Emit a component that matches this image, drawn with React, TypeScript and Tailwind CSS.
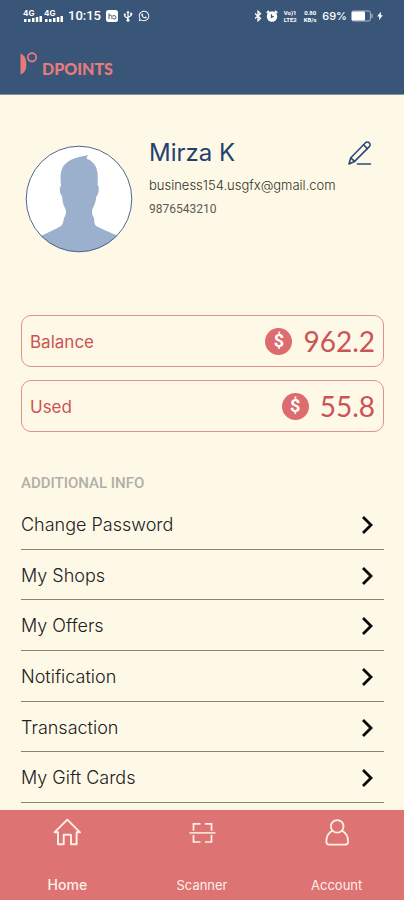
import type { ReactNode } from "react";
import { FaWhatsapp } from "react-icons/fa";

interface MenuItem {
  label: string;
  href: string;
}

const MENU: MenuItem[] = [
  { label: "Change Password", href: "#password" },
  { label: "My Shops", href: "#shops" },
  { label: "My Offers", href: "#offers" },
  { label: "Notification", href: "#notification" },
  { label: "Transaction", href: "#transaction" },
  { label: "My Gift Cards", href: "#gift-cards" },
];

// ── Status bar icons ─────────────────────────────────────────

function Signal() {
  return (
    <div className="flex w-[19px] flex-col">
      <span className="text-[8px] leading-[7px] font-bold">4G</span>
      <svg viewBox="0 0 19 6" className="-mt-px h-[6px] w-[19px]" fill="currentColor">
        <rect x="1" y="3" width="2.500" height="3" />
        <rect x="5" y="3" width="2.500" height="3" />
        <rect x="9" y="2" width="2.500" height="4" />
        <rect x="12.800" y="1" width="2.500" height="5" />
        <rect x="16.500" y="0" width="2.500" height="6" />
      </svg>
    </div>
  );
}

function NoteIcon() {
  return (
    <svg viewBox="0 0 12 12" className="h-3 w-3">
      <rect width="12" height="12" rx="2.5" fill="white" />
      <path
        d="M3 9V3.5M3 6c2-2 3-.5 3 3M6.500 6c2-1 3.500 0 3.500 1.500s-1.500 2-3 1"
        fill="none"
        stroke="#395678"
        strokeWidth="1"
      />
    </svg>
  );
}

function UsbIcon() {
  return (
    <svg viewBox="0 0 10 12" className="h-3 w-[10px]" fill="none" stroke="currentColor" strokeWidth="1.2">
      <path d="M5 2v8M5 8.500 1.800 6.500V4.500M5 7.500l3.200-2V3.500" />
      <path d="M3.300 3 5 .5 6.700 3z" fill="currentColor" stroke="none" />
      <circle cx="5" cy="10.300" r="1.500" fill="currentColor" stroke="none" />
      <circle cx="1.800" cy="4.500" r="1.100" fill="currentColor" stroke="none" />
      <rect x="7.200" y="2.800" width="2" height="2" fill="currentColor" stroke="none" />
    </svg>
  );
}

function BluetoothIcon() {
  return (
    <svg viewBox="0 0 8 12" className="h-3 w-2" fill="none" stroke="currentColor" strokeWidth="1.3">
      <path d="M1 3.500 6.500 8.300 4 10.800V1.200l2.500 2.500L1 8.500" />
    </svg>
  );
}

function AlarmIcon() {
  return (
    <svg viewBox="0 0 12 12" className="h-3 w-3">
      <circle cx="6" cy="6.500" r="5.200" fill="white" />
      <path d="M.8 3 3 1M11.200 3 9 1" stroke="white" strokeWidth="1.800" />
      <path d="M5.500 4.200v3.200l2.200-1.200" fill="none" stroke="#395678" strokeWidth="1.300" />
    </svg>
  );
}

function BatteryIcon() {
  return (
    <svg viewBox="0 0 22 12" className="h-3 w-[22px]">
      <rect x=".6" y="1" width="18.800" height="10" rx="2" fill="none" stroke="white" strokeOpacity=".6" />
      <rect x="1" y="1.500" width="13" height="9" rx="1" fill="white" />
      <rect x="20.400" y="4" width="1.200" height="4" rx=".5" fill="white" fillOpacity=".6" />
    </svg>
  );
}

function BoltIcon() {
  return (
    <svg viewBox="0 0 6 10" className="h-[10px] w-[6px]" fill="currentColor">
      <path d="M3.800.8.200 5.600h2.200L2 9.200l3.800-4.900h-2z" />
    </svg>
  );
}

// ── App icons ────────────────────────────────────────────────

function LogoMark() {
  return (
    <svg viewBox="0 0 18 24" className="h-6 w-[18px]">
      <path d="M.5 1.500C4.800 3 6.300 7.500 6.300 12.500S4.800 21 .5 22.500z" fill="#e67b7d" />
      <circle cx="12" cy="5.300" r="4.200" fill="none" stroke="#e67b7d" strokeWidth="1.800" />
    </svg>
  );
}

function Avatar() {
  return (
    <svg viewBox="0 0 108 108" className="h-27 w-27 shrink-0" role="img" aria-label="Profile photo">
      <defs>
        <clipPath id="avatar-clip">
          <circle cx="54" cy="54" r="53" />
        </clipPath>
      </defs>
      <circle cx="54" cy="54" r="53" fill="#fff" />
      <path
        clipPath="url(#avatar-clip)"
        fill="#9bb0cc"
        d="M8 93 18 90C24 87 31 84 36 81 38 79 38.500 76 39 73 41 70 41.500 67 40.500 64 38 60 37.500 56 37 51 35 49 34.500 46 35 43 35 42 36 41 36 40 35.500 34 35 29 37 24 39 19 43 16 48 14 52 12 58 11.500 63 10 62 12 61.500 13 62 14 66 15 69 18 71 22 73 27 73 34 72.500 40 74 41 74 44 73.500 47 73 49 73 50 71.500 51 71 56 69.500 60 67.500 64 66.500 67 67 70 69 73 69.500 76 69 79 71 81 77 84 84 87 91 90L100 93V110H8z"
      />
      <circle cx="54" cy="54" r="52.800" fill="none" stroke="#4f668c" strokeWidth="1" />
    </svg>
  );
}

function PencilIcon() {
  return (
    <svg
      viewBox="0 0 24 24"
      className="h-6 w-6"
      fill="none"
      stroke="#2b4a78"
      strokeWidth="1.600"
      strokeLinecap="round"
      strokeLinejoin="round"
    >
      <path d="M1 23 2.800 16.800 17.300 2a2.400 2.400 0 0 1 4 0 2.400 2.400 0 0 1 0 3.600L6.600 20.400z" />
      <path d="M2.800 16.800l3.800 3.600M15.500 3.800l3.800 3.800M9.500 23H22.500" />
    </svg>
  );
}

function Coin() {
  return (
    <span className="flex h-[27px] w-[27px] items-center justify-center rounded-full bg-[#dc6c6d] font-['Roboto',sans-serif] text-lg leading-5 font-bold text-white">
      $
    </span>
  );
}

function Chevron() {
  return (
    <svg viewBox="0 0 12 20" className="mr-[11px] h-5 w-3" fill="none" stroke="#080808" strokeWidth="2.800">
      <path d="M2 2 10 10 2 18" />
    </svg>
  );
}

function HomeIcon() {
  return (
    <svg viewBox="0 0 28 28" className="h-7 w-7" fill="none" stroke="currentColor" strokeWidth="1.900" strokeLinejoin="round">
      <path d="M1.500 14.300 14.300 1.600 27 14.300H23.600v11.900h-5.600v-9.500h-7.300v9.500H5V14.300z" />
    </svg>
  );
}

function ScanIcon() {
  return (
    <svg viewBox="0 0 28 28" className="h-7 w-7" fill="none" stroke="currentColor" strokeWidth="1.700">
      <path d="M12.500 5.800H5.500v7M17 5.800h6.500v7M12.500 24H5.500v-7M17 24h6.500v-7" />
      <path d="M1.500 14.900h26" strokeWidth="1.500" />
    </svg>
  );
}

function AccountIcon() {
  return (
    <svg viewBox="0 0 28 28" className="h-7 w-7" fill="none" stroke="currentColor" strokeWidth="1.800" strokeLinejoin="round">
      <circle cx="14.200" cy="8.400" r="6.300" />
      <path d="M9.500 12.600C5.500 15 3.300 19 3.300 23.500c0 2.300 1 3.200 3 3.200h15.800c2 0 3-.9 3-3.200 0-4.500-2.200-8.500-6.200-10.900" />
    </svg>
  );
}

// ── Pieces ───────────────────────────────────────────────────

function AmountCard({ label, amount }: { label: string; amount: string }) {
  return (
    <div className="flex h-[52px] items-center rounded-[10px] border border-[#e0908e] px-2 text-[#cc5355]">
      <span className="flex-1 pt-0.5 text-[17px] leading-6">{label}</span>
      <Coin />
      <span className="ml-[11px] font-['Lato',sans-serif] text-[28px] leading-8">{amount}</span>
    </div>
  );
}

interface NavTabProps {
  label: string;
  href: string;
  icon: ReactNode;
  active?: boolean;
}

function NavTab({ label, href, icon, active }: NavTabProps) {
  return (
    <a href={href} className="flex flex-1 flex-col items-center justify-between">
      {icon}
      <span className={active ? "text-sm leading-5 font-medium" : "text-[13px] leading-5"}>{label}</span>
    </a>
  );
}

export default function App() {
  return (
    <div className="flex min-h-screen flex-col bg-[#fef9e6] font-['Inter',sans-serif]">
      <header className="border-b border-[#8792a0] bg-[#395678] text-white">
        {/* Status bar */}
        <div className="flex h-8 items-center justify-between pr-[21px] pl-[23px]">
          <div className="flex items-center gap-[5px]">
            <div className="flex gap-[2px]">
              <Signal />
              <Signal />
            </div>
            <span className="font-['Roboto',sans-serif] text-[13px] leading-4 font-medium">10:15</span>
            <NoteIcon />
            <UsbIcon />
            <FaWhatsapp className="h-3 w-3" />
          </div>
          <div className="flex items-center gap-1">
            <BluetoothIcon />
            <AlarmIcon />
            <span className="w-4 text-center font-['Roboto',sans-serif] text-[6px] leading-[7px] font-bold">
              Vo)1 LTE2
            </span>
            <span className="w-4 text-center font-['Roboto',sans-serif] text-[6px] leading-[7px] font-bold">
              0.80 KB/s
            </span>
            <span className="text-[11px] leading-4 font-medium">69%</span>
            <BatteryIcon />
            <BoltIcon />
          </div>
        </div>

        {/* Brand */}
        <div className="flex h-[62px] items-start gap-1 px-5 pt-5">
          <LogoMark />
          <span className="pt-[7px] font-['Lato',sans-serif] text-base leading-5 font-black text-[#e67b7d]">
            DPOINTS
          </span>
        </div>
      </header>

      <main className="flex flex-1 flex-col pr-5 pb-[7px] pl-[21px]">
        <section className="flex h-[220px] items-start pt-[42px]">
          <div className="pt-2 pl-1">
            <Avatar />
          </div>
          <div className="min-w-0 flex-1 pl-4">
            <h1 className="text-2xl leading-8 text-[#234170]">Mirza K</h1>
            <p className="mt-2 text-[13px] leading-4 font-light text-[#30302c]">business154.usgfx@gmail.com</p>
            <p className="mt-2 font-['Roboto',sans-serif] text-xs leading-4 text-[#5a5a55]">9876543210</p>
          </div>
          <button type="button" aria-label="Edit profile" className="mt-1 -ml-8 mr-3">
            <PencilIcon />
          </button>
        </section>

        <section className="flex flex-col gap-[13px]">
          <AmountCard label="Balance" amount="962.2" />
          <AmountCard label="Used" amount="55.8" />
        </section>

        <h2 className="mt-[41px] font-['Roboto',sans-serif] text-[15px] leading-5 font-medium text-[#b0afa8]">
          ADDITIONAL INFO
        </h2>
        <ul className="mt-1.5 flex flex-1 flex-col">
          {MENU.map((item) => (
            <li key={item.href} className="flex min-h-12 flex-1 border-b border-[#85867a]">
              <a
                href={item.href}
                className="flex flex-1 items-center justify-between pt-0.5 text-lg leading-6 font-light text-[#20201d]"
              >
                {item.label}
                <Chevron />
              </a>
            </li>
          ))}
        </ul>
      </main>

      <nav className="sticky bottom-0 flex h-[90px] bg-[#de7373] pt-2 pb-[5px] text-[#fff0e8]">
        <NavTab label="Home" href="#home" icon={<HomeIcon />} active />
        <NavTab label="Scanner" href="#scanner" icon={<ScanIcon />} />
        <NavTab label="Account" href="#account" icon={<AccountIcon />} />
      </nav>
    </div>
  );
}
